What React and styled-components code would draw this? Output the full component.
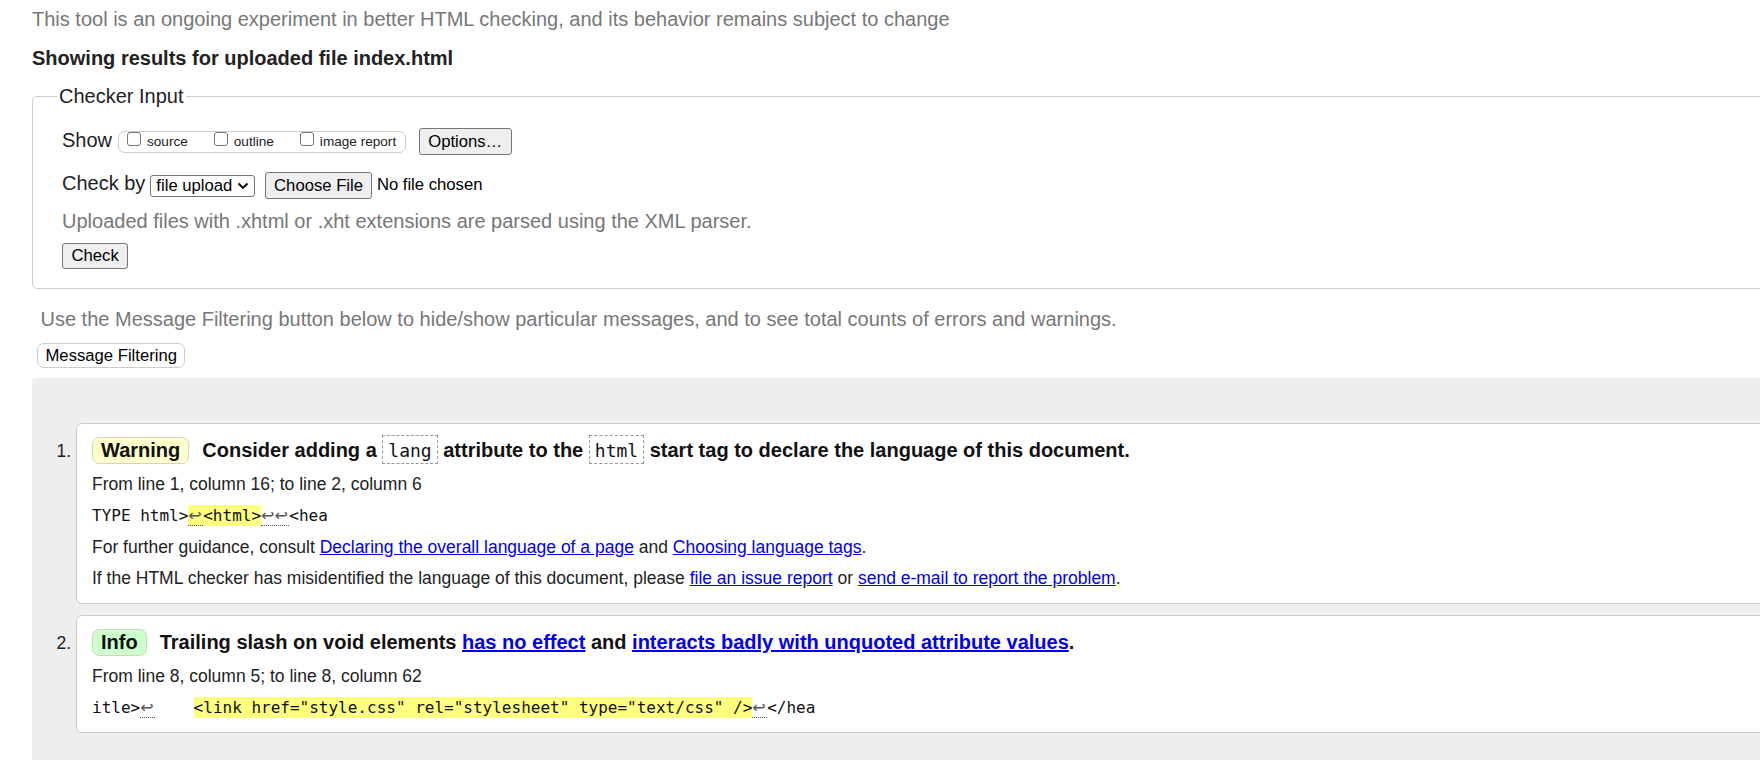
import React from 'react';
import styled, { createGlobalStyle } from 'styled-components';

const GlobalStyle = createGlobalStyle`
  html, body {
    margin: 0;
    padding: 0;
    background: #fff;
    overflow: hidden;
  }
  body {
    font-family: "Liberation Sans", Arial, sans-serif;
    color: #222;
  }
`;

const Page = styled.div`
  width: 1840px;
  padding-left: 32px;
  box-sizing: border-box;
`;

const Intro = styled.p`
  margin: 7px 0 0;
  font-size: 20px;
  line-height: 24px;
  color: #777;
`;

const ResultsTitle = styled.h2`
  margin: 15px 0 0;
  font-size: 20px;
  line-height: 24px;
  font-weight: bold;
  color: #222;
`;

const Fieldset = styled.fieldset`
  margin: 15px 0 0;
  padding: 20px 0 19px 29px;
  border: 1px solid #ccc;
  border-radius: 5px;
  min-width: 0;
`;

const Legend = styled.legend`
  margin-left: -5px;
  padding: 0 2px;
  font-size: 20px;
  line-height: 23px;
  color: #222;
`;

const ControlRow = styled.div`
  display: flex;
  align-items: flex-start;
  height: 27px;
  margin-top: ${(p) => p.$gap || 0}px;
`;

const FieldLabel = styled.span`
  font-size: 20px;
  line-height: 23px;
  margin-top: ${(p) => p.$top || 0}px;
  color: #222;
`;

const CheckGroup = styled.div`
  display: flex;
  align-items: flex-start;
  gap: 26px;
  height: 22.6px;
  box-sizing: border-box;
  margin: 2.7px 0 0 6px;
  padding: 0 8.5px 0 8px;
  border: 1px solid #ccc;
  border-radius: 7px;
`;

const CheckItem = styled.label`
  display: flex;
  align-items: flex-start;
  gap: 5.6px;
  font-size: 13.6px;
  line-height: 16px;
  color: #222;
`;

const CheckBox = styled.input.attrs({ type: 'checkbox' })`
  appearance: none;
  margin: 0;
  width: 14.4px;
  height: 14.4px;
  box-sizing: border-box;
  border: 1px solid #767676;
  border-radius: 3px;
  background: #fff;
`;

const CheckText = styled.span`
  margin-top: 2.4px;
`;

const Button = styled.button`
  display: ${(p) => (p.$block ? 'block' : 'inline-block')};
  height: ${(p) => p.$h || 27}px;
  margin: ${(p) => p.$mt || 0}px 0 0 ${(p) => p.$ml || 0}px;
  padding: 0 8.5px;
  box-sizing: border-box;
  font-family: inherit;
  font-size: 16.67px;
  color: #000;
  background: #efefef;
  border: 1px solid #767676;
  border-radius: 3px;
`;

const SelectBox = styled.div`
  display: flex;
  align-items: center;
  height: 22px;
  box-sizing: border-box;
  margin: 2.7px 0 0 4.6px;
  padding: 0 5px 0 5.4px;
  border: 1px solid #767676;
  border-radius: 3px;
  background: #fff;
  font-size: 16.67px;
  color: #000;

  svg {
    margin-left: 4.3px;
  }
`;

const FileStatus = styled.span`
  margin: 2.9px 0 0 4.4px;
  font-size: 16.67px;
  line-height: 20px;
  color: #000;
`;

const Hint = styled.p`
  margin: 11px 0 0;
  font-size: 20px;
  line-height: 23px;
  color: #777;
`;

const FilterNote = styled.p`
  margin: 18.3px 0 0;
  padding-left: 8.5px;
  font-size: 20px;
  line-height: 23px;
  color: #777;
`;

const FilterButton = styled.button`
  display: block;
  height: 24.5px;
  margin: 12.7px 0 0 5px;
  padding: 0 7.5px;
  box-sizing: border-box;
  font-family: inherit;
  font-size: 16.67px;
  color: #000;
  background: #fff;
  border: 1px solid #ccc;
  border-radius: 7px;
`;

const Results = styled.div`
  margin-top: 10.2px;
  padding: 45px 0 60px 44px;
  background: #eee;
  border-top-left-radius: 4px;
`;

const MessageList = styled.ol`
  margin: 0;
  padding: 0;
  list-style: decimal outside;
`;

const Message = styled.li`
  padding: 11px 15px ${(p) => p.$pb || 15}px;
  background: #fff;
  border: 1px solid #ccc;
  border-radius: 6px;
  font-size: 17.5px;
  line-height: 20px;
  color: #222;

  & + & {
    margin-top: 11px;
  }

  &::marker {
    color: #222;
  }
`;

const MessageTitle = styled.p`
  margin: 0;
  font-size: 20px;
  line-height: 30px;
  font-weight: bold;
  color: #111;
`;

const badgeColors = {
  warning: '#ffffcc',
  info: '#ccffcc',
};

const Badge = styled.strong`
  display: inline-block;
  margin-right: 7.5px;
  padding: 1px 8px;
  line-height: 23px;
  background: ${(p) => badgeColors[p.$kind]};
  border: 1px solid #d4d4c0;
  border-radius: 7px;
`;

const Code = styled.code`
  display: inline-block;
  padding: 3.5px 5px 2.5px;
  font-family: "DejaVu Sans Mono", "Liberation Mono", monospace;
  font-size: 18px;
  font-weight: normal;
  line-height: 21px;
  border: 1px dashed #999;
  background: #fff;
`;

const Link = styled.a`
  color: #0000ee;
  text-decoration: underline;
`;

const Location = styled.p`
  margin: 9px 0 0;
`;

const Extract = styled.p`
  margin: 12px 0 0;
  font-family: "DejaVu Sans Mono", "Liberation Mono", monospace;
  font-size: 16px;
  line-height: 20px;
  white-space: pre;
  color: #111;
`;

const Highlight = styled.mark`
  padding: 1px 0;
  background: #ffff80;
  color: inherit;
`;

const LineBreak = styled.span`
  font-family: "DejaVu Sans", sans-serif;
  font-size: 16px;
  color: #555;
  border-bottom: 1px dotted #555;
  padding-right: 1.5px;
`;

const Para = styled.p`
  margin: 11px 0 0;
`;

const Chevron = () => (
  <svg width="12" height="8" viewBox="0 0 12 8" aria-hidden="true">
    <path d="M1.5 1.5 L6 6 L10.5 1.5" fill="none" stroke="#000" strokeWidth="1.9" />
  </svg>
);

const showOptions = ['source', 'outline', 'image report'];

export default function App() {
  return (
    <>
      <GlobalStyle />
      <Page>
        <Intro>
          This tool is an ongoing experiment in better HTML checking, and its behavior remains subject to change
        </Intro>
        <ResultsTitle>Showing results for uploaded file index.html</ResultsTitle>

        <Fieldset>
          <Legend>Checker Input</Legend>
          <ControlRow>
            <FieldLabel $top={1}>Show</FieldLabel>
            <CheckGroup>
              {showOptions.map((name) => (
                <CheckItem key={name}>
                  <CheckBox />
                  <CheckText>{name}</CheckText>
                </CheckItem>
              ))}
            </CheckGroup>
            <Button $ml={13}>Options…</Button>
          </ControlRow>
          <ControlRow $gap={17}>
            <FieldLabel $top={0.3}>Check by</FieldLabel>
            <SelectBox>
              file upload
              <Chevron />
            </SelectBox>
            <Button $ml={10}>Choose File</Button>
            <FileStatus>No file chosen</FileStatus>
          </ControlRow>
          <Hint>Uploaded files with .xhtml or .xht extensions are parsed using the XML parser.</Hint>
          <Button $block $h={26} $mt={10.3}>Check</Button>
        </Fieldset>

        <FilterNote>
          Use the Message Filtering button below to hide/show particular messages, and to see total counts of errors and warnings.
        </FilterNote>
        <FilterButton>Message Filtering</FilterButton>

        <Results>
          <MessageList>
            <Message>
              <MessageTitle>
                <Badge $kind="warning">Warning</Badge> Consider adding a <Code>lang</Code> attribute to the{' '}
                <Code>html</Code> start tag to declare the language of this document.
              </MessageTitle>
              <Location>From line 1, column 16; to line 2, column 6</Location>
              <Extract>
                TYPE html&gt;<Highlight><LineBreak>↩</LineBreak>&lt;html&gt;</Highlight>
                <LineBreak>↩↩</LineBreak>&lt;hea
              </Extract>
              <Para>
                For further guidance, consult <Link href="#">Declaring the overall language of a page</Link> and{' '}
                <Link href="#">Choosing language tags</Link>.
              </Para>
              <Para>
                If the HTML checker has misidentified the language of this document, please{' '}
                <Link href="#">file an issue report</Link> or <Link href="#">send e-mail to report the problem</Link>.
              </Para>
            </Message>
            <Message $pb={14}>
              <MessageTitle>
                <Badge $kind="info">Info</Badge> Trailing slash on void elements <Link href="#">has no effect</Link> and{' '}
                <Link href="#">interacts badly with unquoted attribute values</Link>.
              </MessageTitle>
              <Location>From line 8, column 5; to line 8, column 62</Location>
              <Extract>
                itle&gt;<LineBreak>↩</LineBreak>{'    '}
                <Highlight>&lt;link href="style.css" rel="stylesheet" type="text/css" /&gt;</Highlight>
                <LineBreak>↩</LineBreak>&lt;/hea
              </Extract>
            </Message>
          </MessageList>
        </Results>
      </Page>
    </>
  );
}
